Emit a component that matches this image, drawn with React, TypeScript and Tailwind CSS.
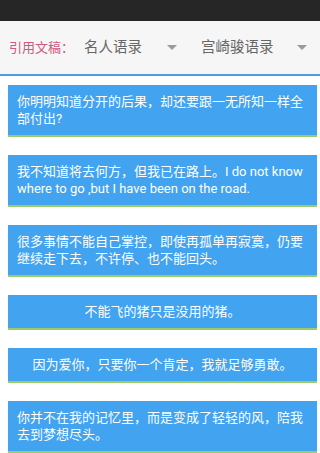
import React from "react";

const quotes: { text: string; center?: boolean }[] = [
  { text: "你明明知道分开的后果，却还要跟一无所知一样全部付出?" },
  { text: "我不知道将去何方，但我已在路上。I do not know where to go ,but I have been on the road." },
  { text: "很多事情不能自己掌控，即使再孤单再寂寞，仍要继续走下去，不许停、也不能回头。" },
  { text: "不能飞的猪只是没用的猪。", center: true },
  { text: "因为爱你，只要你一个肯定，我就足够勇敢。", center: true },
  { text: "你并不在我的记忆里，而是变成了轻轻的风，陪我去到梦想尽头。" },
];

const font = { fontFamily: '"Roboto", "Noto Sans CJK SC", sans-serif' };

function Tri() {
  return (
    <svg width="10" height="5" viewBox="0 0 10 5" className="shrink-0">
      <polygon points="0,0 10,0 5,5" fill="#9a9a9a" />
    </svg>
  );
}

export default function App() {
  return (
    <div className="w-[320px] h-[453px] bg-white overflow-hidden" style={font}>
      <div className="h-[21px] bg-[#262626]" />
      <div className="h-[53px] bg-[#f6f6f6] flex items-center">
        <span className="pl-[9px] w-[75px] text-[13px] text-[#d0577e] whitespace-nowrap">引用文稿：</span>
        <div className="w-[115px] flex items-center pl-[9px] pr-[13px]">
          <span className="flex-1 text-[14.5px] text-[#666]">名人语录</span>
          <Tri />
        </div>
        <div className="w-[130px] flex items-center pl-[11px] pr-[13px]">
          <span className="flex-1 text-[14.5px] text-[#666]">宫崎骏语录</span>
          <Tri />
        </div>
      </div>
      <div className="h-[2px] bg-[#4a9fe0]" />
      <div className="flex flex-col gap-[18px] pt-[9px] pl-[8px] pr-[3px]">
        {quotes.map((q, i) => (
          <div
            key={i}
            className={`bg-[#42a3f1] border-b-2 border-[#9ccc65] text-white text-[13px] leading-[17px] px-[9px] py-[8px] ${q.center ? "text-center" : ""}`}
          >
            {q.text}
          </div>
        ))}
      </div>
    </div>
  );
}
